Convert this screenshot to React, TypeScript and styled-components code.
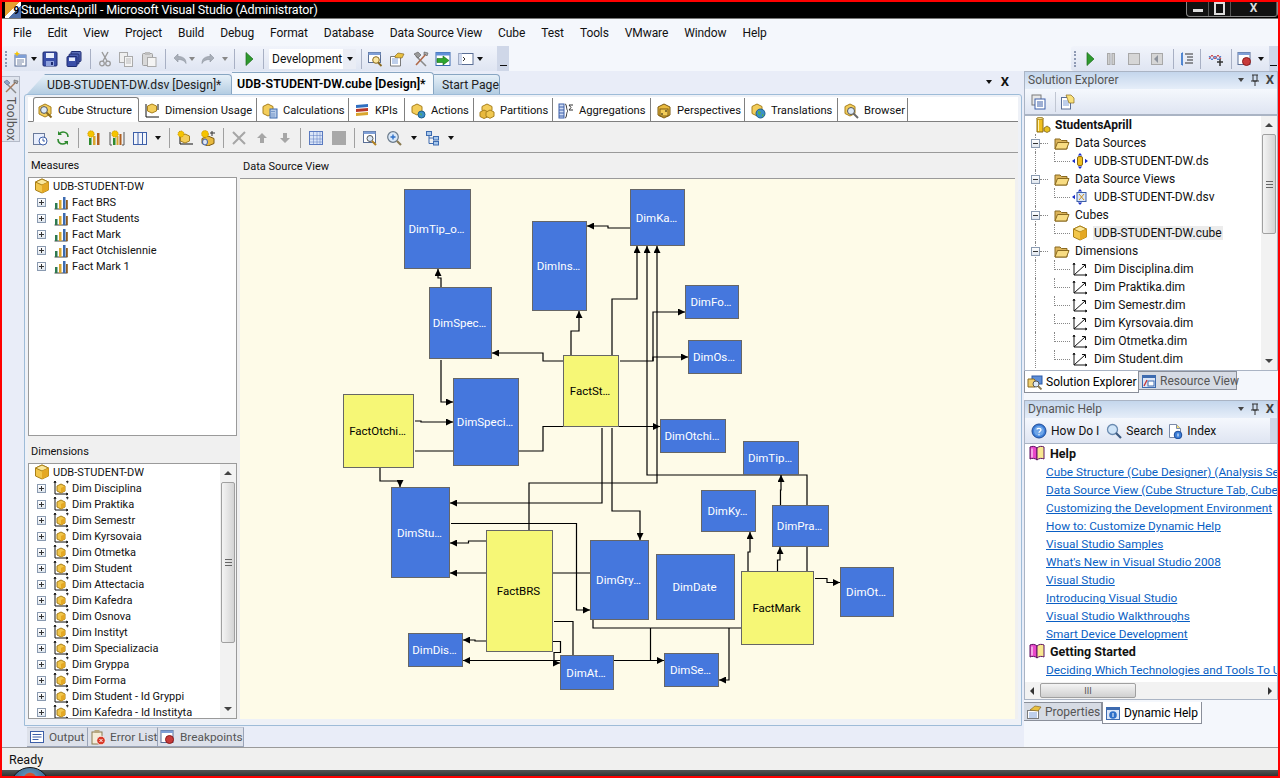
import React from 'react';
import styled, { createGlobalStyle } from 'styled-components';

const GlobalStyle = createGlobalStyle`
    html, body {
        margin: 0;
        padding: 0;
        overflow: hidden;
    }
    body {
        font-family: Roboto, "Liberation Sans", sans-serif;
        font-size: 12px;
        color: #111;
    }
`;

/* small toolbar pictures, all on a 16 unit grid */
const glyphs: Record<string, React.ReactNode> = {
    newProject: <><rect x="2" y="4" width="11" height="11" fill="#fff" stroke="#5a6f96" /><rect x="2" y="4" width="11" height="3" fill="#7f9fd6" /><path d="M4 9h7M4 11h7M4 13h5" stroke="#7a8aa8" /><path d="M4 0l1 2 2 .5-2 1-1 2-1-2-2-1 2-.5z" fill="#f5c400" /></>,
    save: <><rect x="1" y="1" width="14" height="14" rx="1" fill="#3a4fa8" stroke="#1c2a70" /><rect x="4" y="2" width="8" height="5" fill="#e8eefc" /><rect x="4" y="10" width="8" height="5" fill="#8fa2dc" /><rect x="9" y="11" width="2" height="3" fill="#1c2a70" /></>,
    saveAll: <><rect x="5" y="0.5" width="10" height="10" rx="1" fill="#5b6fb8" stroke="#1c2a70" /><rect x="3" y="3" width="10" height="10" rx="1" fill="#4a5eb0" stroke="#1c2a70" /><rect x="1" y="5.5" width="10" height="10" rx="1" fill="#3a4fa8" stroke="#1c2a70" /><rect x="3" y="6.5" width="6" height="3.5" fill="#e8eefc" /></>,
    cut: <><path d="M5 1l5 9M11 1L6 10" stroke="#9a9a9a" strokeWidth="1.4" fill="none" /><circle cx="5" cy="12.5" r="2.3" fill="none" stroke="#9a9a9a" strokeWidth="1.3" /><circle cx="11" cy="12.5" r="2.3" fill="none" stroke="#9a9a9a" strokeWidth="1.3" /></>,
    copy: <><rect x="1.5" y="1.5" width="8" height="10" fill="#efefef" stroke="#aaa" /><rect x="6.5" y="5.5" width="8" height="10" fill="#f4f4f4" stroke="#aaa" /><path d="M8 8h5M8 10h5M8 12h5" stroke="#bbb" /></>,
    paste: <><rect x="1.5" y="2.5" width="10" height="12" rx="1" fill="#d8d8d8" stroke="#a0a0a0" /><rect x="4" y="1" width="5" height="3" fill="#bdbdbd" /><rect x="6.5" y="6.5" width="8.5" height="9" fill="#f4f4f4" stroke="#aaa" /></>,
    undo: <path d="M2 7l4-4v2.5c5 0 8 2 8 7-1.5-3-4-4-8-4V11z" fill="#a8aeb8" stroke="#8d939d" strokeWidth=".6" />,
    redo: <path d="M14 7l-4-4v2.5c-5 0-8 2-8 7 1.5-3 4-4 8-4V11z" fill="#a8aeb8" stroke="#8d939d" strokeWidth=".6" />,
    play: <path d="M5 1.500l7 6.500-7 6.500z" fill="#2e9a2e" stroke="#1b6b1b" strokeWidth=".7" />,
    find: <><rect x="1.5" y="1.5" width="12" height="10" fill="#fff" stroke="#5a6f96" /><rect x="1.5" y="1.5" width="12" height="2.5" fill="#7f9fd6" /><circle cx="9" cy="9" r="3.3" fill="#fbe7a0" stroke="#8a6a20" /><path d="M11 11.5l3.5 3.5" stroke="#8a6a20" strokeWidth="1.8" /></>,
    props: <><path d="M1.5 5.5h10v9.5h-10z" fill="#fff" stroke="#7b7b7b" /><path d="M3 8h6M3 10h6M3 12h6" stroke="#7f9fd6" /><path d="M6 5l3-3 6 1-2 4-7-.5z" fill="#e8c040" stroke="#8a6a20" strokeWidth=".7" /></>,
    tools: <><path d="M3 5l10 10" stroke="#8a8a8a" strokeWidth="1.600" /><path d="M1 3l4-2 3 3-3 3z" fill="#9a9a9a" stroke="#5a5a5a" strokeWidth=".6" /><path d="M13 3L3 14" stroke="#b06a4a" strokeWidth="1.600" /><path d="M11 1l4 1-1 3-1.500-1.500L11 4z" fill="#a8a8a8" stroke="#5a5a5a" strokeWidth=".6" /></>,
    exportArrow: <><rect x="1" y="1.5" width="14" height="13" fill="#fff" stroke="#3d6bb0" /><rect x="1" y="1.5" width="14" height="3" fill="#5f8fd8" /><path d="M2 7.5h6V5l6 4.5L8 14v-2.5H2z" fill="#2ea62e" stroke="#136b13" strokeWidth=".6" /></>,
    cmdWindow: <><rect x="1" y="2.5" width="14" height="11" fill="#fff" stroke="#5a6f96" /><rect x="1" y="2.5" width="3" height="11" fill="#cfd9ee" /><path d="M5 6l2 2-2 2" stroke="#333" fill="none" /></>,
    pause: <><rect x="4.5" y="2.5" width="2.5" height="11" fill="#cfcfcf" stroke="#a8a8a8" /><rect x="9" y="2.5" width="2.5" height="11" fill="#cfcfcf" stroke="#a8a8a8" /></>,
    stop: <rect x="2.5" y="2.5" width="11" height="11" fill="#d6d6d6" stroke="#a8a8a8" />,
    restart: <><rect x="2.5" y="2.5" width="11" height="11" fill="#d6d6d6" stroke="#a8a8a8" /><path d="M9 4L5 8l4 4z" fill="#8d939d" /></>,
    stepLines: <><path d="M3 2h1M3 14h1" stroke="#2e6fc8" /><path d="M3 2v12" stroke="#2e6fc8" strokeWidth="1.6" /><path d="M6 3h8M8 6h6M8 9h6M6 12h8" stroke="#333" /></>,
    wave: <><path d="M1 8l3-4 3 4 3-4 3 4" stroke="#d04040" fill="none" /><path d="M1 5l3 4 3-4 3 4 3-4" stroke="#4070c8" fill="none" /><path d="M9 11h6M12 8v7" stroke="#333" strokeWidth="1.5" /></>,
    bpWindow: <><rect x="1" y="1.5" width="12" height="12" fill="#fff" stroke="#5a6f96" /><rect x="1" y="1.5" width="12" height="2.5" fill="#7f9fd6" /><circle cx="9.5" cy="10.5" r="4" fill="#c83a3a" stroke="#8a1c1c" /></>,
    cubeSearch: <><path d="M8 1l6 3v7l-6 3-6-3V4z" fill="#f3cd5a" stroke="#a8801c" /><circle cx="7" cy="7" r="3.4" fill="#dbe9f8" stroke="#555" /><path d="M9.5 9.5l5 5" stroke="#8a6a20" strokeWidth="2" /></>,
    cubeArrows: <><path d="M2 1v13h13" stroke="#111" fill="none" /><path d="M8 1l4.5 2v5L8 10 3.5 8V3z" fill="#f3cd5a" stroke="#a8801c" /><path d="M14 1v6" stroke="#111" /></>,
    cubeCalc: <><path d="M6 1l5 2.5v7L6 13l-5-2.5v-7z" fill="#f3cd5a" stroke="#a8801c" /><rect x="8" y="6" width="7" height="9" fill="#b8cce8" stroke="#3d6bb0" /><path d="M9.5 8.5h4M9.5 11h4M9.5 13h4" stroke="#3d6bb0" strokeDasharray="1 1" /></>,
    kpi: <><path d="M2 2l12-1v3L2 5z" fill="#2f6fc0" /><path d="M2 6l12-1v3L2 9z" fill="#b8382a" /><path d="M2 10l12-1v3L2 13z" fill="#d9a62e" /></>,
    actions: <><path d="M7 1l5 2.5v6L7 12 2 9.5v-6z" fill="#f3cd5a" stroke="#a8801c" /><circle cx="11.5" cy="11.5" r="3.5" fill="#3a90c8" stroke="#1d5f8a" /><path d="M10 10l2 1-1 2" fill="#55b04a" /></>,
    partitions: <><path d="M8 1l5 2.5v4L8 10 3 7.5v-4z" fill="#f3cd5a" stroke="#a8801c" /><path d="M5 7l4.5 2.2v4.3L5 15.5l-4-2v-4.3z" fill="#e8b93e" stroke="#a8801c" /><path d="M11 7l4 2v4.3l-4 2-4-2V9.2z" fill="#f0c850" stroke="#a8801c" /></>,
    aggregations: <><rect x="1" y="1" width="5" height="14" fill="#cfdcf4" stroke="#3d5fa8" /><path d="M1 4h5M1 7h5M1 10h5M1 13h5" stroke="#3d5fa8" /><path d="M7 1c2 0 1 6 3 7-2 1-1 7-3 7" stroke="#333" fill="none" /><path d="M15 2h-4l2 2.5L11 7h4" stroke="#333" fill="none" /></>,
    perspectives: <><path d="M8 1l6 3v8l-6 3-6-3V4z" fill="#e8b93e" stroke="#7d5a10" /><rect x="4" y="6" width="8" height="7" fill="#f3cd5a" stroke="#7d5a10" /><circle cx="6" cy="11" r=".8" /><circle cx="10" cy="8" r=".8" /></>,
    translations: <><path d="M7 1l5 2.5v7L7 13l-5-2.5v-7z" fill="#f3cd5a" stroke="#a8801c" /><circle cx="10.5" cy="10.5" r="4.5" fill="#3a90c8" stroke="#1d5f8a" /><path d="M8 8l3 1-1 3-2-1zM12 11l2 1-2 2z" fill="#55b04a" /></>,
    browser: <><path d="M7 1l5 2.5v7L7 13l-5-2.5v-7z" fill="#f3cd5a" stroke="#a8801c" /><circle cx="8" cy="8" r="3.5" fill="#dbe9f8" stroke="#555" /><path d="M10.5 10.5l4.5 4.5" stroke="#6a6a6a" strokeWidth="2" /></>,
    clockCube: <><rect x="1.5" y="3.5" width="11" height="11" fill="#e8eefc" stroke="#6a7a9a" /><circle cx="11" cy="11" r="4" fill="#fff" stroke="#3d5fa8" /><path d="M11 8.5V11h2" stroke="#3d5fa8" fill="none" /></>,
    refresh: <><path d="M13 7c0-3-2-5-5-5-2 0-3 1-4 2" stroke="#2e8a2e" strokeWidth="1.6" fill="none" /><path d="M3 1v4h4z" fill="#2e8a2e" /><path d="M3 9c0 3 2 5 5 5 2 0 3-1 4-2" stroke="#2e8a2e" strokeWidth="1.6" fill="none" /><path d="M13 15v-4H9z" fill="#2e8a2e" /></>,
    sunBars: <><circle cx="5" cy="4" r="3.2" fill="#f5c400" stroke="#c89000" strokeDasharray="1 1" /><rect x="3" y="8" width="2.5" height="7" fill="#2e8a2e" /><rect x="7" y="6" width="2.5" height="9" fill="#d9a62e" /><rect x="11" y="3" width="2.5" height="12" fill="#b06020" /></>,
    sunBarsBox: <><circle cx="6" cy="4" r="3.2" fill="#f5c400" stroke="#c89000" strokeDasharray="1 1" /><path d="M1 2v13h2M15 2v13h-2" stroke="#555" fill="none" /><rect x="4" y="8" width="2.5" height="7" fill="#2e8a2e" /><rect x="7.5" y="6" width="2" height="9" fill="#d9a62e" /><rect x="10.5" y="4" width="2" height="11" fill="#b06020" /></>,
    columns: <><rect x="1.5" y="2.5" width="13" height="12" fill="#f2f5fb" stroke="#3d5fa8" /><path d="M6 2.5v12M10.5 2.5v12" stroke="#3d5fa8" /></>,
    sunCube: <><path d="M3 1v13h13" stroke="#111" fill="none" /><path d="M8 4l4.5 2v5L8 13l-4.5-2V6z" fill="#f3cd5a" stroke="#a8801c" /><circle cx="4" cy="4" r="3" fill="#f5c400" stroke="#c89000" strokeDasharray="1 1" /></>,
    sunDb: <><path d="M8 6l6 2.5v5L8 16l-6-2.5v-5z" fill="#e8b93e" stroke="#7d5a10" /><circle cx="5" cy="4" r="3.4" fill="#f5c400" stroke="#c89000" strokeDasharray="1 1" /><path d="M12 1v5M10 3h5" stroke="#333" /><ellipse cx="5" cy="12" rx="2.5" ry="3" fill="#dfe6f4" stroke="#3d5fa8" /></>,
    cross: <path d="M2 2l12 12M14 2L2 14" stroke="#a6a6a6" strokeWidth="2" />,
    up: <path d="M8 3l5 5h-3v5H6V8H3z" fill="#a6a6a6" />,
    down: <path d="M8 13l5-5h-3V3H6v5H3z" fill="#a6a6a6" />,
    grid: <><rect x="1.5" y="1.5" width="13" height="13" fill="#dbe6f8" stroke="#5a7ac0" /><path d="M1.5 5.5h13M1.5 9h13M1.5 12h13M5.5 1.5v13M9 1.5v13M12 1.5v13" stroke="#5a7ac0" strokeDasharray="1 1" /></>,
    graySquare: <rect x="1" y="1" width="14" height="14" fill="#a8a8a8" />,
    zoomFit: <><rect x="1.5" y="1.5" width="12" height="11" fill="#fff" stroke="#5a6f96" /><rect x="1.5" y="1.5" width="12" height="2.5" fill="#7f9fd6" /><circle cx="8" cy="8.5" r="3" fill="#dbe9f8" stroke="#555" /><path d="M10 11l4 4" stroke="#b08020" strokeWidth="2" /></>,
    zoomIn: <><circle cx="7" cy="7" r="5.3" fill="#dbe9f8" stroke="#6a7a8a" strokeWidth="1.2" /><path d="M4.5 7h5M7 4.5v5" stroke="#2e6fc8" strokeWidth="1.4" /><path d="M11 11l4 4" stroke="#8a7a50" strokeWidth="2.2" /></>,
    tree: <><rect x="1.5" y="1.5" width="5" height="4" fill="#a8c8ec" stroke="#3d6bb0" /><rect x="8.5" y="6.5" width="5" height="3.5" fill="#a8c8ec" stroke="#3d6bb0" /><rect x="8.5" y="11.5" width="5" height="3.5" fill="#a8c8ec" stroke="#3d6bb0" /><path d="M4 5.5v8h4.5M4 8h4.5" stroke="#3d6bb0" fill="none" /></>,
    cube: <><path d="M8 1l6.5 3v8L8 15l-6.5-3V4z" fill="#f2c64a" stroke="#a87f18" /><path d="M8 1l6.5 3L8 7 1.5 4z" fill="#fbe79a" stroke="#a87f18" /><path d="M8 7v8l6.5-3V4z" fill="#e4a824" /></>,
    factBars: <><path d="M1.5 15h13" stroke="#444" /><rect x="2" y="9" width="2.5" height="6" fill="#2e7a50" /><rect x="6" y="6" width="2.5" height="9" fill="#d9a62e" /><rect x="10" y="3" width="2.5" height="12" fill="#3d6bb0" /><rect x="13" y="6" width="1.8" height="9" fill="#8a5a20" /></>,
    dimCube: <><path d="M2 1v13h13" stroke="#111" fill="none" /><path d="M1 3l1-2 1 2M13 13l2 1-2 1" stroke="#111" fill="none" /><path d="M13 2l2-1-.5 2.300" stroke="#111" fill="none" /><path d="M8 4l4 2v5l-4 2-4-2V6z" fill="#f2c64a" stroke="#a87f18" /><path d="M8 8v5l4-2V6z" fill="#e4a824" /></>,
    dimAxes: <><path d="M2 2v12h13" stroke="#111" fill="none" /><path d="M2 14L13 4" stroke="#111" fill="none" /><path d="M10 3.500h3.500V7M1 4l1-2 1 2M13 13l2 1-2 1" stroke="#111" fill="none" /></>,
    folder: <><path d="M1 4h5l1.500 1.500H13V14H1z" fill="#dcb45a" stroke="#8a6a20" /><path d="M3.500 7.500H15L12.500 14H1z" fill="#f8dc82" stroke="#8a6a20" /></>,
    project: <><path d="M2 1h6v14H2z" fill="#f0c020" stroke="#8a6a10" /><ellipse cx="5" cy="1.500" rx="3" ry="1" fill="#fbe79a" stroke="#8a6a10" strokeWidth=".6" /><rect x="3" y="3" width="1" height="11" fill="#fff3b0" /><path d="M9 11l3-2 3 2v3l-3 1.500L9 14z" fill="#e8c020" stroke="#6a5010" strokeWidth=".7" /></>,
    dataSource: <><rect x="5.500" y="3.500" width="5" height="9" rx="1.500" fill="#f0c020" stroke="#8a6a10" /><path d="M8 0l2.200 2.500H5.800zM8 16l2.200-2.500H5.800zM0 8l3-2.200v4.400zM16 8l-3-2.200v4.400z" fill="#1a2ec8" /></>,
    dsvDoc: <><path d="M8 0l2.200 2.500H5.800zM8 16l2.200-2.500H5.800zM0 8l3-2.200v4.400z" fill="#1a2ec8" /><rect x="5" y="3.500" width="9" height="9" fill="#dbe6f8" stroke="#3d5fa8" /><path d="M7 5l5 6M12 5l-5 6" stroke="#c89020" /></>,
    slnFiles: <><rect x="1" y="1" width="9" height="10" fill="#e8e8e8" stroke="#7b7b7b" /><rect x="4" y="5" width="10" height="10" fill="#fff" stroke="#3d5fa8" /><path d="M6 8h6M6 10h6M6 12h6" stroke="#3d5fa8" /></>,
    slnProps: <><rect x="1.500" y="3.500" width="9" height="11.500" fill="#fff" stroke="#5a6f96" /><path d="M3 7h6M3 9h6M3 11h6" stroke="#7f9fd6" /><path d="M6 1h5l3 3v5H9z" fill="#f8e07a" stroke="#8a6a20" strokeWidth=".7" /></>,
    slnExplorer: <><rect x="5" y="2" width="10" height="8" fill="#5f8fd8" stroke="#2d5aa8" /><path d="M1 5h6l1 1v7H1z" fill="#f0d070" stroke="#8a6a20" /><circle cx="9" cy="10" r="3" fill="#dbe9f8" stroke="#555" /><path d="M11 12l3.500 3.500" stroke="#8a7a50" strokeWidth="1.800" /></>,
    resourceView: <><rect x="1.500" y="2.500" width="13" height="12" fill="#dbe6f8" stroke="#3d6bb0" /><rect x="1.500" y="2.500" width="13" height="2.500" fill="#3d6bb0" /><rect x="7" y="8" width="6" height="5" fill="#fff" stroke="#3d6bb0" /><path d="M3 13l3-6" stroke="#c83a3a" strokeWidth="1.400" /></>,
    helpCircle: <><circle cx="8" cy="8" r="7" fill="#3d7fd8" stroke="#1c4a98" /><circle cx="8" cy="8" r="5" fill="#6fa6e8" /><path d="M6 6.500C6 5 10 5 10 6.800c0 1.500-2 1.300-2 3M8 11.200v1" stroke="#fff" strokeWidth="1.300" fill="none" /></>,
    search: <><circle cx="6.500" cy="6.500" r="5" fill="#cfe4f8" stroke="#6a8ab0" strokeWidth="1.300" /><path d="M10 10l5 5" stroke="#3d5a80" strokeWidth="2.200" /></>,
    helpDoc: <><path d="M2.500 1.500h7l4 4v9h-11z" fill="#fff" stroke="#7b8aa8" /><path d="M9.500 1.500v4h4" fill="#f8e07a" stroke="#7b8aa8" /><circle cx="11" cy="12" r="3.800" fill="#3d7fd8" stroke="#1c4a98" /><path d="M11 10.500v3" stroke="#fff" /></>,
    book: <><path d="M1 2c2-1 5-1 7 1v12c-2-2-5-2-7-1z" fill="#e848c8" stroke="#5a1060" /><path d="M15 2c-2-1-5-1-7 1v12c2-2 5-2 7-1z" fill="#f8e890" stroke="#5a1060" /><path d="M3 3.500v9" stroke="#fff" /></>,
    output: <><rect x="1.500" y="2.500" width="13" height="11" fill="#fff" stroke="#3d5fa8" /><path d="M3.500 5.500h9M3.500 8h9M3.500 10.500h6" stroke="#3d5fa8" /></>,
    errorList: <><rect x="2" y="3" width="10" height="12" fill="#f4ecd8" stroke="#8a7a50" /><rect x="4.500" y="1" width="5" height="3" fill="#b8a880" /><circle cx="11" cy="11.500" r="4.300" fill="#d83a2a" stroke="#fff" strokeWidth=".8" /><path d="M9.500 10l3 3M12.500 10l-3 3" stroke="#fff" /></>,
    properties: <><rect x="1.500" y="6.500" width="11" height="8" fill="#fff" stroke="#7b7b7b" /><path d="M3 9h8M3 11h8M3 13h8" stroke="#7f9fd6" /><path d="M4 6l5-4 6 1-3 4z" fill="#e8c040" stroke="#8a6a20" strokeWidth=".7" /></>,
    dynHelp: <><rect x="1.500" y="2.500" width="13" height="12" fill="#dbe6f8" stroke="#3d6bb0" /><rect x="1.500" y="2.500" width="13" height="2.500" fill="#3d6bb0" /><circle cx="8" cy="10" r="3.800" fill="#2e6fc8" /><path d="M8 8v4" stroke="#fff" /></>,
    toolbox: <><path d="M3 4l10 10" stroke="#8a8a8a" strokeWidth="1.400" /><path d="M1 3l3-2 3 3-3 2z" fill="#8fa4c8" stroke="#5a6a88" strokeWidth=".6" /><path d="M13 3L3 13" stroke="#a87a5a" strokeWidth="1.400" /><path d="M11 1l4 1-1 3-1.500-1.500L11 4z" fill="#a8a8a8" stroke="#5a5a5a" strokeWidth=".6" /></>,
};

type IconProps = { name: string; size?: number };

const Icon: React.FC<IconProps> = ({ name, size = 16 }) => (
    <IconSvg width={size} height={size} viewBox="0 0 16 16">{glyphs[name]}</IconSvg>
);

const IconSvg = styled.svg`
    flex: none;
    display: block;
`;

const DropArrow = styled.span`
    flex: none;
    width: 0;
    height: 0;
    border-left: 3.5px solid transparent;
    border-right: 3.5px solid transparent;
    border-top: 4px solid ${(p: { $color?: string }) => p.$color || '#111'};
`;

const ToolSep = styled.span<{ $tone?: string }>`
    flex: none;
    width: 1px;
    height: 20px;
    margin: 0 ${(p) => (p.$tone ? 3.5 : 5)}px;
    background: ${(p) => p.$tone || '#a8b0c4'};
`;

const Slot = styled.span<{ $w?: number }>`
    flex: none;
    width: ${(p) => p.$w || 23}px;
    height: 20px;
    display: flex;
    align-items: center;
    justify-content: center;
`;

/* ---------- top of the window ---------- */

const TitleBar = styled.div`
    height: 17px;
    flex: none;
    background: #000;
    border-bottom: 1px solid #777;
    box-sizing: border-box;
    color: #fff;
    display: flex;
    align-items: center;
    padding-left: 3px;
    font-size: 12.5px;
    letter-spacing: -0.15px;
    line-height: 16px;
    position: relative;
`;

const TitleText = styled.span`
    margin-left: 0;
`;

const AppMark = styled.span`
    width: 16px;
    height: 16px;
    background: linear-gradient(135deg, #e7a030 0 45%, #fff 45% 60%, #4d6ea8 60%);
    color: #000;
    font-size: 10px;
    font-weight: 700;
    line-height: 18px;
    text-align: right;
    padding-right: 2px;
    box-sizing: border-box;
`;

const WindowButtons = styled.div`
    position: absolute;
    right: 0;
    top: -2px;
    height: 17px;
    width: 92px;
    display: grid;
    grid-template-columns: 22px 22px 46px;
    border: 1px solid #888;
    border-top: none;
    border-radius: 0 0 4px 4px;
    box-sizing: border-box;
    background: #111;
`;

const WinButton = styled.span`
    display: flex;
    align-items: center;
    justify-content: center;
    border-right: 1px solid #555;
    color: #ddd;
    font-size: 12px;
    font-weight: 700;
`;

const MinBar = styled.span`
    width: 10px;
    height: 3px;
    background: #ddd;
    margin-top: 5px;
`;

const RestoreBox = styled.span`
    width: 7px;
    height: 9px;
    border: 2px solid #ddd;
`;

const MenuBar = styled.div`
    height: 27px;
    flex: none;
    background: #f4f7fc;
    display: flex;
    align-items: center;
    padding-left: 11px;
    gap: 16px;
    font-size: 12px;
    letter-spacing: -0.1px;
`;

const ToolRow = styled.div`
    height: 25px;
    flex: none;
    background: #f4f7fc;
    display: flex;
    justify-content: space-between;
    align-items: stretch;
`;

const ToolStrip = styled.div<{ $width: number }>`
    width: ${(p) => p.$width}px;
    display: flex;
    align-items: center;
    padding-left: 3px;
    box-sizing: border-box;
    background: linear-gradient(#f1f4fb, #dfe5f2);
    border-radius: 3px 0 0 3px;
`;

const Grip = styled.span`
    width: 2px;
    height: 16px;
    margin-right: 2px;
    border-left: 2px dotted #8d99b3;
    flex: none;
`;

const Overflow = styled.span`
    margin-left: auto;
    width: 12px;
    align-self: stretch;
    background: #cfd7e8;
    display: flex;
    flex-direction: column;
    justify-content: flex-end;
    align-items: center;
    padding-bottom: 5px;
    gap: 1px;
    &::before {
        content: '';
        width: 7px;
        height: 1px;
        background: #111;
    }
`;

const ConfigCombo = styled.div`
    flex: none;
    width: 87px;
    height: 20px;
    background: #fff;
    display: flex;
    align-items: center;
    padding: 0 0 0 3px;
    box-sizing: border-box;
    font-size: 12px;
    border-right: 13px solid #eaedf5;
    position: relative;
`;

const ComboArrow = styled.span`
    position: absolute;
    right: -10px;
    top: 8px;
    width: 0;
    height: 0;
    border-left: 3.5px solid transparent;
    border-right: 3.5px solid transparent;
    border-top: 4px solid #111;
`;

/* ---------- main area ---------- */

const Page = styled.div`
    width: 1280px;
    height: 778px;
    box-sizing: border-box;
    border: 2px solid #f00;
    display: flex;
    flex-direction: column;
    background: #f4f7fc;
    overflow: hidden;
`;

const Main = styled.div`
    flex: 1;
    min-height: 0;
    display: flex;
    background: #e9edf8;
`;

const ToolboxStrip = styled.div`
    width: 20px;
    flex: none;
    padding-top: 5px;
    box-sizing: border-box;
`;

const ToolboxTab = styled.div`
    width: 18px;
    height: 66px;
    background: #dfe4ee;
    border: 1px solid #b4bac8;
    border-left: none;
    box-sizing: border-box;
    display: flex;
    flex-direction: column;
    align-items: center;
    padding-top: 2px;
    color: #555;
`;

const ToolboxLabel = styled.span`
    writing-mode: vertical-rl;
    margin-top: 2px;
    letter-spacing: 0.2px;
`;

const DocColumn = styled.div`
    width: 1000px;
    flex: none;
    display: flex;
    flex-direction: column;
`;

const DocTabs = styled.div`
    height: 23px;
    flex: none;
    display: flex;
    align-items: flex-end;
    padding-left: 5px;
    position: relative;
`;

const DocTab = styled.div<{ $w: number; $active?: boolean; $slant?: boolean; $pad: number }>`
    width: ${(p) => p.$w}px;
    height: ${(p) => (p.$active ? 22 : 20)}px;
    flex: none;
    box-sizing: border-box;
    padding-left: ${(p) => p.$pad}px;
    display: flex;
    align-items: center;
    font-size: ${(p) => (p.$active ? 12.4 : 12.2)}px;
    white-space: nowrap;
    font-weight: ${(p) => (p.$active ? 600 : 400)};
    color: ${(p) => (p.$active ? '#000' : '#222')};
    background: ${(p) => (p.$active ? '#f7fafd' : 'linear-gradient(#e6f0f8, #b4cde2)')};
    border-top: 1px solid #88a6c2;
    border-right: 1px solid #88a6c2;
    border-radius: 0 4px 0 0;
    ${(p) => p.$slant && 'clip-path: polygon(18px 0, 100% 0, 100% 100%, 0 100%);'}
`;

const DocControls = styled.div`
    position: absolute;
    right: 13px;
    top: 4px;
    display: flex;
    align-items: center;
    gap: 9px;
`;

const CloseMark = styled.span`
    font-size: 13px;
    font-weight: 700;
    line-height: 14px;
`;

const DocFrame = styled.div`
    flex: 1;
    min-height: 0;
    margin-left: 2px;
    border: 1px solid #9ebcd8;
    border-radius: 3px 3px 0 0;
    box-sizing: border-box;
    background: #eef1f7;
    padding: 2px 3px 6px 3px;
    display: flex;
    flex-direction: column;
`;

const DesignerTabs = styled.div`
    height: 25px;
    flex: none;
    background: #fff;
    display: flex;
    align-items: flex-end;
    padding-left: 5px;
    border-bottom: 1px solid #808080;
    box-sizing: border-box;
`;

const DesignerTab = styled.div<{ $w: number; $active?: boolean }>`
    width: ${(p) => p.$w}px;
    height: 23px;
    flex: none;
    box-sizing: border-box;
    display: flex;
    align-items: center;
    gap: 5px;
    padding: 2px 0 0 5px;
    font-size: 11.2px;
    white-space: nowrap;
    border-right: 1px solid #808080;
    ${(p) => p.$active && `
        border: 1px solid #808080;
        border-bottom: 1px solid #fff;
        height: 25px;
        margin-bottom: -1px;
        border-radius: 3px 3px 0 0;
        padding: 2px 0 0 3px;
        gap: 5px;
    `}
`;

const DesignerBar = styled.div`
    height: 31px;
    flex: none;
    background: #f0f0f0;
    border-bottom: 1px solid #9a9a9a;
    box-sizing: border-box;
    display: flex;
    align-items: center;
    padding: 2px 0 0 0;
`;

const Panes = styled.div`
    flex: 1;
    min-height: 0;
    display: grid;
    grid-template-columns: 209px 775px;
    column-gap: 3px;
    background: #f0f0f0;
`;

const LeftPanes = styled.div`
    display: grid;
    grid-template-rows: 283px 1fr;
    row-gap: 3px;
    min-height: 0;
`;

const Pane = styled.div`
    display: flex;
    flex-direction: column;
    min-height: 0;
    min-width: 0;
`;

const PaneHeader = styled.div<{ $raised?: boolean }>`
    height: 24px;
    flex: none;
    background: #f0f0f0;
    box-sizing: border-box;
    padding: ${(p) => (p.$raised ? 0 : 2)}px 0 0 3px;
    display: flex;
    align-items: center;
    font-size: 11px;
`;

const PaneList = styled.div`
    flex: 1;
    min-height: 0;
    background: #fff;
    border: 1px solid #9a9a9a;
    box-sizing: border-box;
    display: flex;
    overflow: hidden;
`;

const ListBody = styled.div`
    flex: 1;
    min-width: 0;
`;

const ListRow = styled.div<{ $root?: boolean }>`
    height: 16px;
    display: flex;
    align-items: center;
    white-space: nowrap;
    font-size: 11px;
    padding-left: ${(p) => (p.$root ? 5 : 8)}px;
    gap: 3px;
`;

const ExpandBox = styled.span`
    flex: none;
    width: 9px;
    height: 9px;
    box-sizing: border-box;
    border: 1px solid #8a9ab0;
    background: linear-gradient(#fff, #dfe6ee);
    position: relative;
    margin-right: 4px;
    &::before {
        content: '';
        position: absolute;
        left: 1px;
        right: 1px;
        top: 3px;
        height: 1px;
        background: #333;
    }
`;

const PlusBox = styled(ExpandBox)`
    &::after {
        content: '';
        position: absolute;
        top: 1px;
        bottom: 1px;
        left: 3px;
        width: 1px;
        background: #333;
    }
`;

const VScroll = styled.div`
    width: 16px;
    flex: none;
    background: #f2f2f2;
    display: flex;
    flex-direction: column;
    align-items: center;
`;

const ScrollEnd = styled.span<{ $dir: 'up' | 'down' }>`
    flex: none;
    height: 18px;
    display: flex;
    align-items: center;
    justify-content: center;
    &::before {
        content: '';
        width: 0;
        height: 0;
        border-left: 4px solid transparent;
        border-right: 4px solid transparent;
        ${(p) => (p.$dir === 'up' ? 'border-bottom: 4px solid #444;' : 'border-top: 4px solid #444;')}
    }
`;

const ScrollThumb = styled.span<{ $h: number }>`
    width: 14px;
    height: ${(p) => p.$h}px;
    flex: none;
    box-sizing: border-box;
    border: 1px solid #a0a0a0;
    border-radius: 2px;
    background: linear-gradient(90deg, #f4f4f4, #d4d4d4);
    display: flex;
    align-items: center;
    justify-content: center;
    &::before {
        content: '';
        width: 7px;
        height: 5px;
        border-top: 1px solid #666;
        border-bottom: 1px solid #666;
        background: linear-gradient(transparent 40%, #666 40% 60%, transparent 60%);
    }
`;

const ScrollGap = styled.span`
    flex: 1;
`;

/* ---------- diagram ---------- */

const CANVAS_X = 240;
const CANVAS_Y = 178;

const Canvas = styled.div`
    flex: 1;
    min-height: 0;
    position: relative;
    background: #fefbe8;
    border-top: 1px solid #9a9a9a;
    margin-top: 1px;
    overflow: hidden;
`;

const Wires = styled.svg`
    position: absolute;
    left: 0;
    top: 0;
`;

const NodeBox = styled.div<{ $x: number; $y: number; $w: number; $h: number; $fact?: boolean }>`
    position: absolute;
    left: ${(p) => p.$x - CANVAS_X}px;
    top: ${(p) => p.$y - CANVAS_Y - 1}px;
    width: ${(p) => p.$w}px;
    height: ${(p) => p.$h}px;
    box-sizing: border-box;
    border: 1px solid #666;
    background: ${(p) => (p.$fact ? '#f6f776' : '#4577dd')};
    color: ${(p) => (p.$fact ? '#000' : '#fff')};
    font-size: 11.5px;
    display: flex;
    align-items: center;
    justify-content: center;
    white-space: nowrap;
    padding-right: 2px;
`;

const nodes: { t: string; x: number; y: number; r: number; b: number; fact?: boolean }[] = [
    { t: 'DimTip_o…', x: 404, y: 189, r: 471, b: 269 },
    { t: 'DimKa…', x: 630, y: 189, r: 685, b: 246 },
    { t: 'DimIns…', x: 532, y: 221, r: 587, b: 311 },
    { t: 'DimFo…', x: 685, y: 285, r: 739, b: 319 },
    { t: 'DimOs…', x: 688, y: 340, r: 742, b: 374 },
    { t: 'DimSpec…', x: 429, y: 287, r: 492, b: 359 },
    { t: 'FactSt…', x: 563, y: 355, r: 619, b: 427, fact: true },
    { t: 'DimSpeci…', x: 453, y: 378, r: 519, b: 466 },
    { t: 'FactOtchi…', x: 343, y: 394, r: 414, b: 468, fact: true },
    { t: 'DimOtchi…', x: 660, y: 419, r: 726, b: 453 },
    { t: 'DimTip…', x: 743, y: 441, r: 799, b: 475 },
    { t: 'DimKy…', x: 701, y: 490, r: 756, b: 532 },
    { t: 'DimPra…', x: 772, y: 505, r: 829, b: 547 },
    { t: 'DimStu…', x: 391, y: 487, r: 450, b: 578 },
    { t: 'FactBRS', x: 486, y: 530, r: 553, b: 652, fact: true },
    { t: 'DimGry…', x: 590, y: 540, r: 649, b: 620 },
    { t: 'DimDate', x: 656, y: 554, r: 735, b: 620 },
    { t: 'FactMark', x: 741, y: 571, r: 814, b: 645, fact: true },
    { t: 'DimOt…', x: 840, y: 567, r: 894, b: 617 },
    { t: 'DimDis…', x: 408, y: 633, r: 463, b: 667 },
    { t: 'DimAt…', x: 560, y: 655, r: 614, b: 690 },
    { t: 'DimSe…', x: 664, y: 653, r: 719, b: 687 },
];

// page coordinates, true = ends in an arrow head
const wires: [string, boolean][] = [
    ['441,287 441,278 438,278 438,269', true],
    ['630,228 608,228 608,226 587,226', true],
    ['571,355 571,331 579,331 579,311', true],
    ['563,361 543,361 543,353 492,353', true],
    ['612,355 612,299 637,299 637,246', true],
    ['620,361 653,361 653,312 685,312', true],
    ['653,361 653,357 688,357', true],
    ['441,360 441,402 453,402', true],
    ['415,421 421,421 421,422 453,422', true],
    ['415,451 543,451 543,426.500 563,426.500', false],
    ['619,426.500 660,426.500', true],
    ['380,468 380,481 400,481 400,487', true],
    ['602,428 602,503 450,503', true],
    ['612,428 612,511 640,511 640,540', true],
    ['807,505 807,475 647,475 647,246', true],
    ['807,571 807,547', false],
    ['529,530 529,483 657,483 657,246', true],
    ['451,523.500 576.500,523.500 576.500,610 590,610', true],
    ['486,541 468.500,541 468.500,543 450,543', true],
    ['486,573 450,573', true],
    ['553,573 590,573', false],
    ['554,621.500 573,621.500 573,655', false],
    ['553,641.500 560.500,641.500 560.500,652.500 554,652.500 554,663 560,663', true],
    ['486,641 475,641 475,640 463,640', true],
    ['560,660.500 463,660.500', true],
    ['614,660.500 664,660.500', true],
    ['741,628 593,628 593,620', false],
    ['650.500,628 650.500,660', false],
    ['729,628 729,680 719,680', true],
    ['748,571 748,552 750,552 750,532', true],
    ['777.500,571 777.500,560 780,560 780,547', true],
    ['780.500,505 780.500,490 781,490 781,475', true],
    ['815,578.500 827,578.500 827,582.500 840,582.500', true],
];

const Diagram: React.FC = () => (
    <Canvas>
        <Wires width={775} height={540} viewBox={`${CANVAS_X} ${CANVAS_Y + 1} 775 540`}>
            <defs>
                <marker id="tip" viewBox="0 0 6 6" refX="6" refY="3" markerWidth="7" markerHeight="7" markerUnits="userSpaceOnUse" orient="auto">
                    <path d="M0 0L6 3L0 6z" fill="#000" />
                </marker>
            </defs>
            {wires.map(([points, head], i) => (
                <polyline key={i} points={points} fill="none" stroke="#000" strokeWidth="1.2" markerEnd={head ? 'url(#tip)' : undefined} />
            ))}
        </Wires>
        {nodes.map((n) => (
            <NodeBox key={n.t} $x={n.x} $y={n.y} $w={n.r - n.x} $h={n.b - n.y} $fact={n.fact}>{n.t}</NodeBox>
        ))}
    </Canvas>
);

/* ---------- right column ---------- */

const RightColumn = styled.div`
    width: 254px;
    flex: none;
    margin-left: 2px;
    display: flex;
    flex-direction: column;
    background: #f4f7fc;
`;

const ToolTitle = styled.div`
    height: 18px;
    flex: none;
    background: linear-gradient(#c4d6ec, #e6eef9);
    border: 1px solid #aab4c4;
    border-bottom: none;
    box-sizing: border-box;
    display: flex;
    align-items: center;
    padding: 0 3px 2px 3px;
    color: #555;
    font-size: 12px;
`;

const TitleControls = styled.span`
    margin-left: auto;
    display: flex;
    align-items: center;
    gap: 6px;
`;

const PinIcon = () => (
    <IconSvg width={10} height={12} viewBox="0 0 10 12"><path d="M2 1h6M3 1v6h4V1M1 7h8M5 7v5" stroke="#333" fill="none" /></IconSvg>
);

const ToolClose = styled.span`
    font-size: 13px;
    font-weight: 700;
    color: #444;
    line-height: 12px;
`;

const ToolBarRow = styled.div<{ $h: number; $gap: number; $pad: number }>`
    height: ${(p) => p.$h}px;
    flex: none;
    background: linear-gradient(#f5f8fd, #dfe5f2);
    border: 1px solid #aab4c4;
    border-top: none;
    box-sizing: border-box;
    display: flex;
    align-items: center;
    padding-left: ${(p) => p.$pad}px;
    gap: ${(p) => p.$gap}px;
    font-size: 12px;
`;

const ToolBody = styled.div`
    display: flex;
    background: #fff;
    border: 1px solid #aab4c4;
    box-sizing: border-box;
    overflow: hidden;
    flex: none;
`;

const SolutionBody = styled(ToolBody)`
    height: 256px;
`;

const TreeBody = styled.div`
    flex: 1;
    min-width: 0;
`;

const TreeRow = styled.div<{ $level: number }>`
    height: 18px;
    display: flex;
    align-items: center;
    position: relative;
    white-space: nowrap;
    font-size: 12px;
    padding-left: ${(p) => [10, 6, 29][p.$level]}px;
    ${(p) => p.$level > 0 && `
        &::before {
            content: '';
            position: absolute;
            left: 10px;
            top: 0;
            bottom: 0;
            border-left: 1px dotted #888;
        }
    `}
    ${(p) => p.$level === 2 && `
        &::after {
            content: '';
            position: absolute;
            left: 29px;
            top: 0;
            height: 9px;
            width: 15px;
            border-left: 1px dotted #888;
            border-bottom: 1px dotted #888;
        }
    `}
`;

const TreeBox = styled(ExpandBox)`
    z-index: 1;
    margin-right: 0;
`;

const TreeDots = styled.span`
    width: 8px;
    flex: none;
    margin-right: 6px;
    border-top: 1px dotted #888;
`;

const ChildIcon = styled.span`
    margin-left: 18px;
    margin-right: 6px;
    flex: none;
    display: flex;
`;

const FolderIcon = styled.span`
    margin-right: 5px;
    flex: none;
    display: flex;
`;

const ProjectName = styled.strong`
    margin-left: 4px;
    font-weight: 700;
`;

const Selected = styled.span`
    background: #ececec;
    padding: 0 1px;
    margin-left: -1px;
`;

const PanelTabs = styled.div<{ $top?: number }>`
    height: 24px;
    flex: none;
    display: flex;
    align-items: flex-start;
    background: #f4f7fc;
    margin-top: ${(p) => p.$top || 0}px;
`;

const PanelTab = styled.div<{ $w: number; $active?: boolean }>`
    width: ${(p) => p.$w}px;
    height: ${(p) => (p.$active ? 22 : 19)}px;
    flex: none;
    box-sizing: border-box;
    display: flex;
    align-items: center;
    gap: 3px;
    padding-left: 2px;
    font-size: 12px;
    white-space: nowrap;
    border: 1px solid #8a8f9a;
    border-top: ${(p) => (p.$active ? 'none' : '1px solid #8a8f9a')};
    background: ${(p) => (p.$active ? '#fff' : '#d6dbe4')};
    color: ${(p) => (p.$active ? '#000' : '#555')};
    ${(p) => !p.$active && 'border-left: none;'}
`;

const HelpSpacer = styled.div`
    height: 5px;
    flex: none;
`;

const ToolItem = styled.span<{ $gap?: number }>`
    display: flex;
    align-items: center;
    gap: 4px;
    margin-right: ${(p) => p.$gap || 0}px;
`;

const ToolEdge = styled.span`
    margin-left: auto;
    width: 7px;
    align-self: stretch;
    background: #cfd7e8;
`;

const HelpBody = styled.div`
    height: 238px;
    flex: none;
    background: #fff;
    border: 1px solid #aab4c4;
    border-top: none;
    border-bottom: none;
    box-sizing: border-box;
    overflow: hidden;
    padding-top: 1px;
    font-size: 11.8px;
`;

const HelpHead = styled.div`
    height: 18px;
    box-sizing: border-box;
    display: flex;
    align-items: center;
    gap: 5px;
    padding: 0 0 2px 4px;
    font-size: 12.5px;
    font-weight: 700;
    white-space: nowrap;
`;

const HelpLink = styled.a`
    display: block;
    height: 18px;
    line-height: 18px;
    margin-left: 21px;
    color: #0a5fc4;
    text-decoration: underline;
    white-space: nowrap;
`;

const HScroll = styled.div`
    height: 18px;
    flex: none;
    background: #f2f2f2;
    border: 1px solid #aab4c4;
    border-top: none;
    box-sizing: border-box;
    display: flex;
    align-items: center;
`;

const HArrow = styled.span<{ $left?: boolean }>`
    flex: none;
    width: 0;
    height: 0;
    margin: 0 5px;
    border-top: 4px solid transparent;
    border-bottom: 4px solid transparent;
    ${(p) => (p.$left ? 'border-right: 4px solid #333;' : 'border-left: 4px solid #333;')}
`;

const HThumb = styled.span`
    width: 96px;
    height: 15px;
    box-sizing: border-box;
    border: 1px solid #a0a0a0;
    border-radius: 2px;
    background: linear-gradient(#f4f4f4, #d0d0d0);
    display: flex;
    align-items: center;
    justify-content: center;
    margin-left: 1px;
    color: #555;
    font-size: 9px;
    line-height: 10px;
`;

const HGap = styled.span`
    flex: 1;
`;

/* ---------- bottom ---------- */

const BottomTabs = styled.div`
    height: 21px;
    flex: none;
    display: flex;
    padding-left: 5px;
    padding-top: 1px;
    box-sizing: border-box;
`;

const BottomTab = styled.div<{ $w: number }>`
    width: ${(p) => p.$w}px;
    flex: none;
    box-sizing: border-box;
    background: #dde1ea;
    border: 1px solid #9aa4b8;
    border-top: 1px solid #c4cad6;
    border-left: none;
    display: flex;
    align-items: center;
    gap: 4px;
    padding-left: 2px;
    color: #555;
    font-size: 11.8px;
    white-space: nowrap;
`;

const StatusBar = styled.div`
    height: 23px;
    flex: none;
    background: #f0f0ef;
    border-top: 1px solid #9a9a9a;
    box-sizing: border-box;
    display: flex;
    align-items: center;
    padding-left: 7px;
    font-size: 12.5px;
`;

const Taskbar = styled.div`
    height: 6px;
    flex: none;
    background: linear-gradient(#555, #333);
    position: relative;
`;

const StartOrb = styled.span`
    position: absolute;
    left: 8px;
    top: -3px;
    width: 38px;
    height: 38px;
    border-radius: 50%;
    background: radial-gradient(circle at 50% 30%, #d8502a 0 18%, #5b8fb8 22%, #2c4f72 70%);
    border: 1px solid #111;
`;

const measureItems = ['Fact BRS', 'Fact Students', 'Fact Mark', 'Fact Otchislennie', 'Fact Mark 1'];

const dimensionItems = [
    'Dim Disciplina', 'Dim Praktika', 'Dim Semestr', 'Dim Kyrsovaia', 'Dim Otmetka', 'Dim Student',
    'Dim Attectacia', 'Dim Kafedra', 'Dim Osnova', 'Dim Instityt', 'Dim Specializacia', 'Dim Gryppa',
    'Dim Forma', 'Dim Student - Id Gryppi', 'Dim Kafedra - Id Instityta',
];

const designerTabs = [
    { t: 'Cube Structure', i: 'cubeSearch', w: 106, active: true },
    { t: 'Dimension Usage', i: 'cubeArrows', w: 118 },
    { t: 'Calculations', i: 'cubeCalc', w: 92 },
    { t: 'KPIs', i: 'kpi', w: 56 },
    { t: 'Actions', i: 'actions', w: 69 },
    { t: 'Partitions', i: 'partitions', w: 79 },
    { t: 'Aggregations', i: 'aggregations', w: 98 },
    { t: 'Perspectives', i: 'perspectives', w: 94 },
    { t: 'Translations', i: 'translations', w: 93 },
    { t: 'Browser', i: 'browser', w: 70 },
];

const helpLinksTop = [
    'Cube Structure (Cube Designer) (Analysis Services)',
    'Data Source View (Cube Structure Tab, Cube Designer)',
    'Customizing the Development Environment',
    'How to: Customize Dynamic Help',
    'Visual Studio Samples',
    "What's New in Visual Studio 2008",
    'Visual Studio',
    'Introducing Visual Studio',
    'Visual Studio Walkthroughs',
    'Smart Device Development',
];

const DimFile: React.FC<{ name: string }> = ({ name }) => (
    <TreeRow $level={2}>
        <ChildIcon><Icon name="dimAxes" /></ChildIcon>
        {name}
    </TreeRow>
);

const Group: React.FC<{ name: string }> = ({ name }) => (
    <TreeRow $level={1}>
        <TreeBox />
        <TreeDots />
        <FolderIcon><Icon name="folder" /></FolderIcon>
        {name}
    </TreeRow>
);

export default function App() {
    return (
        <>
            <GlobalStyle />
            <Page>
                <TitleBar>
                    <AppMark>9</AppMark>
                    <TitleText>StudentsAprill - Microsoft Visual Studio (Administrator)</TitleText>
                    <WindowButtons>
                        <WinButton><MinBar /></WinButton>
                        <WinButton><RestoreBox /></WinButton>
                        <WinButton>X</WinButton>
                    </WindowButtons>
                </TitleBar>
                <MenuBar>
                    {['File', 'Edit', 'View', 'Project', 'Build', 'Debug', 'Format', 'Database', 'Data Source View', 'Cube', 'Test', 'Tools', 'VMware', 'Window', 'Help'].map((m) => (
                        <span key={m}>{m}</span>
                    ))}
                </MenuBar>
                <ToolRow>
                    <ToolStrip $width={507}>
                        <Grip />
                        <Slot $w={20}><Icon name="newProject" /></Slot>
                        <DropArrow />
                        <Slot $w={26}><Icon name="save" /></Slot>
                        <Slot $w={22}><Icon name="saveAll" /></Slot>
                        <ToolSep />
                        <Slot $w={18}><Icon name="cut" /></Slot>
                        <Slot><Icon name="copy" /></Slot>
                        <Slot><Icon name="paste" /></Slot>
                        <ToolSep />
                        <Slot $w={18}><Icon name="undo" /></Slot>
                        <DropArrow $color="#888" />
                        <Slot $w={26}><Icon name="redo" /></Slot>
                        <Slot $w={8}><DropArrow $color="#888" /></Slot>
                        <ToolSep />
                        <Slot $w={18}><Icon name="play" /></Slot>
                        <ToolSep />
                        <ConfigCombo>Development<ComboArrow /></ConfigCombo>
                        <ToolSep />
                        <Slot $w={16}><Icon name="find" /></Slot>
                        <Slot $w={28}><Icon name="props" /></Slot>
                        <Slot $w={20}><Icon name="tools" /></Slot>
                        <Slot $w={24}><Icon name="exportArrow" /></Slot>
                        <Slot $w={22}><Icon name="cmdWindow" /></Slot>
                        <DropArrow />
                        <Overflow />
                    </ToolStrip>
                    <ToolStrip $width={207}>
                        <Grip />
                        <Slot $w={19}><Icon name="play" /></Slot>
                        <Slot><Icon name="pause" /></Slot>
                        <Slot><Icon name="stop" /></Slot>
                        <Slot><Icon name="restart" /></Slot>
                        <ToolSep />
                        <Slot $w={16}><Icon name="stepLines" /></Slot>
                        <ToolSep />
                        <Slot $w={20}><Icon name="wave" /></Slot>
                        <ToolSep />
                        <Slot $w={16}><Icon name="bpWindow" /></Slot>
                        <Slot $w={16}><DropArrow /></Slot>
                        <Overflow />
                    </ToolStrip>
                </ToolRow>
                <Main>
                    <ToolboxStrip>
                        <ToolboxTab>
                            <Icon name="toolbox" />
                            <ToolboxLabel>Toolbox</ToolboxLabel>
                        </ToolboxTab>
                    </ToolboxStrip>
                    <DocColumn>
                        <DocTabs>
                            <DocTab $w={205} $pad={20} $slant>UDB-STUDENT-DW.dsv [Design]*</DocTab>
                            <DocTab $w={202} $pad={5} $active>UDB-STUDENT-DW.cube [Design]*</DocTab>
                            <DocTab $w={66} $pad={8}>Start Page</DocTab>
                            <DocControls>
                                <DropArrow />
                                <CloseMark>X</CloseMark>
                            </DocControls>
                        </DocTabs>
                        <DocFrame>
                            <DesignerTabs>
                                {designerTabs.map((tab) => (
                                    <DesignerTab key={tab.t} $w={tab.w} $active={tab.active}>
                                        <Icon name={tab.i} />
                                        {tab.t}
                                    </DesignerTab>
                                ))}
                            </DesignerTabs>
                            <DesignerBar>
                                <Slot><Icon name="clockCube" /></Slot>
                                <Slot><Icon name="refresh" /></Slot>
                                <ToolSep $tone="#a0a0a0" />
                                <Slot><Icon name="sunBars" /></Slot>
                                <Slot><Icon name="sunBarsBox" /></Slot>
                                <Slot><Icon name="columns" /></Slot>
                                <Slot $w={14}><DropArrow /></Slot>
                                <ToolSep $tone="#a0a0a0" />
                                <Slot><Icon name="sunCube" /></Slot>
                                <Slot><Icon name="sunDb" /></Slot>
                                <ToolSep $tone="#a0a0a0" />
                                <Slot><Icon name="cross" /></Slot>
                                <Slot><Icon name="up" /></Slot>
                                <Slot><Icon name="down" /></Slot>
                                <ToolSep $tone="#a0a0a0" />
                                <Slot><Icon name="grid" /></Slot>
                                <Slot><Icon name="graySquare" /></Slot>
                                <ToolSep $tone="#a0a0a0" />
                                <Slot><Icon name="zoomFit" /></Slot>
                                <Slot $w={26}><Icon name="zoomIn" /></Slot>
                                <Slot $w={14}><DropArrow /></Slot>
                                <Slot><Icon name="tree" /></Slot>
                                <Slot $w={14}><DropArrow /></Slot>
                            </DesignerBar>
                            <Panes>
                                <LeftPanes>
                                    <Pane>
                                        <PaneHeader $raised>Measures</PaneHeader>
                                        <PaneList>
                                            <ListBody>
                                                <ListRow $root><Icon name="cube" />UDB-STUDENT-DW</ListRow>
                                                {measureItems.map((m) => (
                                                    <ListRow key={m}><PlusBox /><Icon name="factBars" />{m}</ListRow>
                                                ))}
                                            </ListBody>
                                        </PaneList>
                                    </Pane>
                                    <Pane>
                                        <PaneHeader $raised>Dimensions</PaneHeader>
                                        <PaneList>
                                            <ListBody>
                                                <ListRow $root><Icon name="cube" />UDB-STUDENT-DW</ListRow>
                                                {dimensionItems.map((d) => (
                                                    <ListRow key={d}><PlusBox /><Icon name="dimCube" />{d}</ListRow>
                                                ))}
                                            </ListBody>
                                            <VScroll>
                                                <ScrollEnd $dir="up" />
                                                <ScrollThumb $h={161} />
                                                <ScrollGap />
                                                <ScrollEnd $dir="down" />
                                            </VScroll>
                                        </PaneList>
                                    </Pane>
                                </LeftPanes>
                                <Pane>
                                    <PaneHeader>Data Source View</PaneHeader>
                                    <Diagram />
                                </Pane>
                            </Panes>
                        </DocFrame>
                        <BottomTabs>
                            <BottomTab $w={61}><Icon name="output" />Output</BottomTab>
                            <BottomTab $w={70}><Icon name="errorList" />Error List</BottomTab>
                            <BottomTab $w={86}><Icon name="bpWindow" />Breakpoints</BottomTab>
                        </BottomTabs>
                    </DocColumn>
                    <RightColumn>
                        <ToolTitle>
                            Solution Explorer
                            <TitleControls><DropArrow $color="#444" /><PinIcon /><ToolClose>X</ToolClose></TitleControls>
                        </ToolTitle>
                        <ToolBarRow $h={26} $gap={2} $pad={4}>
                            <Slot $w={20}><Icon name="slnFiles" /></Slot>
                            <ToolSep $tone="#c0c6d2" />
                            <Slot $w={14}><Icon name="slnProps" /></Slot>
                        </ToolBarRow>
                        <SolutionBody>
                            <TreeBody>
                                <TreeRow $level={0}><Icon name="project" /><ProjectName>StudentsAprill</ProjectName></TreeRow>
                                <Group name="Data Sources" />
                                <TreeRow $level={2}><ChildIcon><Icon name="dataSource" /></ChildIcon>UDB-STUDENT-DW.ds</TreeRow>
                                <Group name="Data Source Views" />
                                <TreeRow $level={2}><ChildIcon><Icon name="dsvDoc" /></ChildIcon>UDB-STUDENT-DW.dsv</TreeRow>
                                <Group name="Cubes" />
                                <TreeRow $level={2}><ChildIcon><Icon name="cube" /></ChildIcon><Selected>UDB-STUDENT-DW.cube</Selected></TreeRow>
                                <Group name="Dimensions" />
                                {['Dim Disciplina.dim', 'Dim Praktika.dim', 'Dim Semestr.dim', 'Dim Kyrsovaia.dim', 'Dim Otmetka.dim', 'Dim Student.dim'].map((f) => (
                                    <DimFile key={f} name={f} />
                                ))}
                            </TreeBody>
                            <VScroll>
                                <ScrollEnd $dir="up" />
                                <ScrollThumb $h={100} />
                                <ScrollGap />
                                <ScrollEnd $dir="down" />
                            </VScroll>
                        </SolutionBody>
                        <PanelTabs>
                            <PanelTab $w={115} $active><Icon name="slnExplorer" />Solution Explorer</PanelTab>
                            <PanelTab $w={98}><Icon name="resourceView" />Resource View</PanelTab>
                        </PanelTabs>
                        <HelpSpacer />
                        <ToolTitle>
                            Dynamic Help
                            <TitleControls><DropArrow $color="#444" /><PinIcon /><ToolClose>X</ToolClose></TitleControls>
                        </ToolTitle>
                        <ToolBarRow $h={26} $gap={4} $pad={6}>
                            <ToolItem $gap={3}><Icon name="helpCircle" />How Do I</ToolItem>
                            <ToolItem $gap={0}><Icon name="search" />Search</ToolItem>
                            <ToolItem><Icon name="helpDoc" />Index</ToolItem>
                            <ToolEdge />
                        </ToolBarRow>
                        <HelpBody>
                            <HelpHead><Icon name="book" />Help</HelpHead>
                            {helpLinksTop.map((l) => <HelpLink key={l}>{l}</HelpLink>)}
                            <HelpHead><Icon name="book" />Getting Started</HelpHead>
                            <HelpLink>Deciding Which Technologies and Tools To Use</HelpLink>
                        </HelpBody>
                        <HScroll>
                            <HArrow $left />
                            <HThumb>III</HThumb>
                            <HGap />
                            <HArrow />
                        </HScroll>
                        <PanelTabs $top={2}>
                            <PanelTab $w={78}><Icon name="properties" />Properties</PanelTab>
                            <PanelTab $w={100} $active><Icon name="dynHelp" />Dynamic Help</PanelTab>
                        </PanelTabs>
                    </RightColumn>
                </Main>
                <StatusBar>Ready</StatusBar>
                <Taskbar><StartOrb /></Taskbar>
            </Page>
        </>
    );
}
